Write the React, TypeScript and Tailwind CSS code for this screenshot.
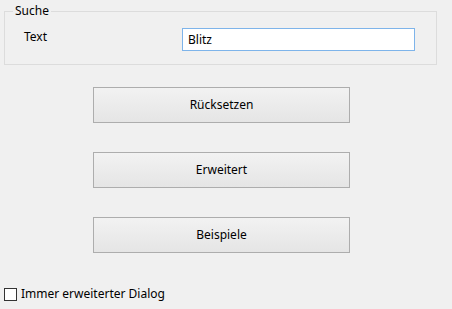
import React from 'react';

const buttons = ['Rücksetzen', 'Erweitert', 'Beispiele'];

const App: React.FC = () => {
  return (
    <div className="w-[452px] h-[309px] bg-[#f0f0f0] text-[12px] leading-[16px] text-black font-['Noto_Sans',sans-serif] overflow-hidden">
      <div className="pl-[4px] pt-[3px] w-[437px]">
        <fieldset className="border border-[#dcdcdc] h-[62px] px-[8px]">
          <legend className="px-[2px] leading-[16px]">Suche</legend>
          <div className="flex items-center mt-[9px]">
            <label className="ml-[11px] w-[158px] -mt-[6px]">Text</label>
            <input
              type="text"
              defaultValue="Blitz"
              className="w-[233px] h-[23px] bg-white border border-[#7eb4ea] px-[5px] outline-none text-[12px]"
            />
          </div>
        </fieldset>
      </div>

      <div className="flex flex-col gap-[29px] pl-[93px] mt-[22px]">
        {buttons.map((b) => (
          <button
            key={b}
            className="w-[257px] h-[36px] border border-[#adadad] bg-gradient-to-b from-[#f2f2f2] to-[#e5e5e5]"
          >
            {b}
          </button>
        ))}
      </div>

      <label className="flex items-center mt-[33px] pl-[4px]">
        <span className="w-[13px] h-[13px] border border-[#333333] bg-white" />
        <span className="ml-[4px]">Immer erweiterter Dialog</span>
      </label>
    </div>
  );
};

export default App;
